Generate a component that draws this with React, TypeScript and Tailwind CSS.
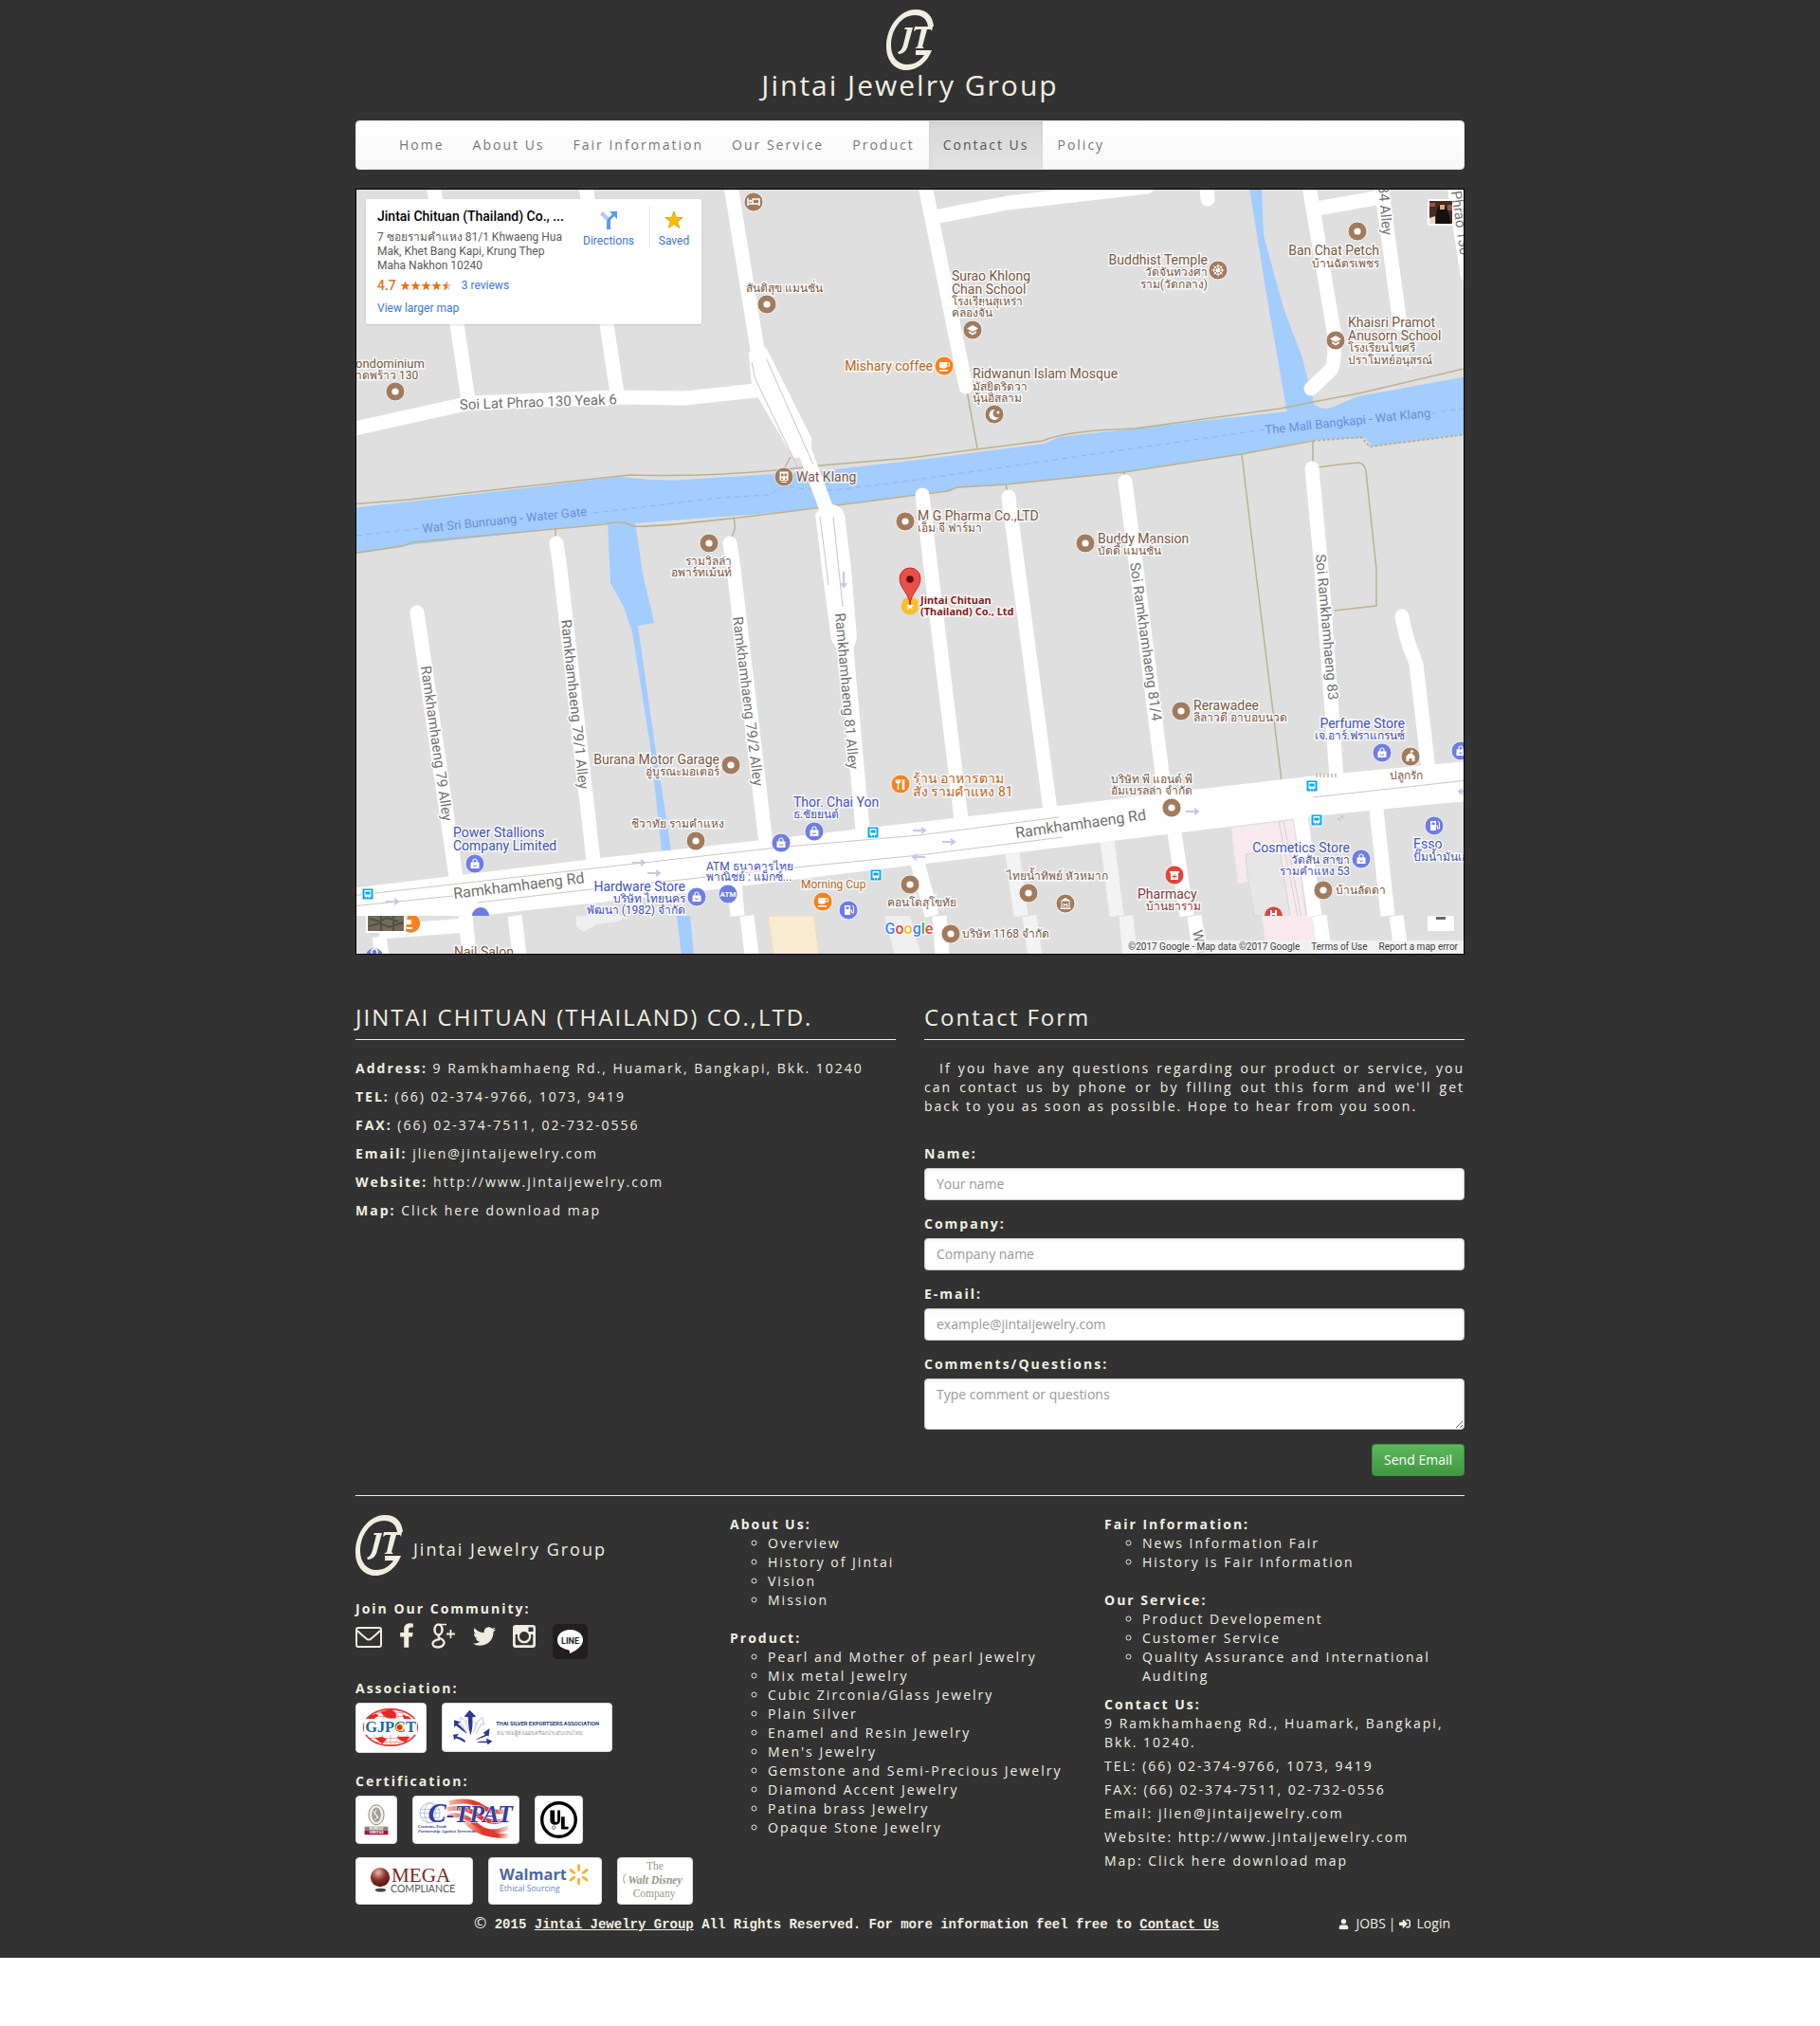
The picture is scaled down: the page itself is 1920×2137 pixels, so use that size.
import React from "react";
import { FaFacebookF, FaTwitter, FaUser, FaSignInAlt } from "react-icons/fa";

const sans = "font-['Open_Sans','Noto_Sans',sans-serif]";

function Monogram() {
  return (
    <svg viewBox="0 0 50 64" className="h-16 w-[50px] shrink-0 fill-[#f0eee0]" role="img" aria-label="JT monogram">
      <path d="M50 18C49 7 43 0 31 0C14 0 0 19 0 39C0 54 9 64 21 64C34 64 44 54 48 43H31V48H40C36 54 30 58 22 58C12 58 5 50 5 38C5 21 16 6 30 6C38 6 43 10 44 18Z" />
      <path d="M20 19H28L23 37C22 43 18 47 13 47L12 45C15 44 17 41 18 37L22 21H19Z" />
      <path d="M30 18H49L48 23L47 21H43L38 39L40 41H30L33 39L37 21H32L29 23Z" />
    </svg>
  );
}

/* ---------- Map ---------- */

type Label = [string, number, number, string, string, number?];
const brown = "#7b5a43";
const blue = "#4152c0";
const orange = "#b9671c";

const labels: Label[] = [
  ["สันติสุข แมนชั่น", 787, 308, brown, "start", 12],
  ["ondominium", 375, 388, brown, "start", 13],
  ["าดพร้าว 130", 375, 400, brown, "start", 12],
  ["Mishary coffee", 984, 391, orange, "end"],
  ["Surao Khlong", 1004, 296, brown, "start"],
  ["Chan School", 1004, 310, brown, "start"],
  ["โรงเรียนสุเหร่า", 1004, 322, brown, "start", 12],
  ["คลองจั่น", 1004, 334, brown, "start", 12],
  ["Ridwanun Islam Mosque", 1026, 399, brown, "start"],
  ["มัสยิดริดวา", 1026, 412, brown, "start", 12],
  ["นุ้นอิสลาม", 1026, 424, brown, "start", 12],
  ["Buddhist Temple", 1274, 279, brown, "end"],
  ["วัดจันทวงศา", 1274, 291, brown, "end", 12],
  ["ราม(วัดกลาง)", 1274, 304, brown, "end", 12],
  ["Ban Chat Petch", 1455, 269, brown, "end"],
  ["บ้านฉัตรเพชร", 1455, 282, brown, "end", 12],
  ["Khaisri Pramot", 1422, 345, brown, "start"],
  ["Anusorn School", 1422, 359, brown, "start"],
  ["โรงเรียนไขศรี", 1422, 371, brown, "start", 12],
  ["ปราโมทย์อนุสรณ์", 1422, 384, brown, "start", 12],
  ["Wat Klang", 840, 508, brown, "start"],
  ["M G Pharma Co.,LTD", 968, 549, brown, "start"],
  ["เอ็ม จี ฟาร์มา", 968, 561, brown, "start", 12],
  ["Buddy Mansion", 1158, 573, brown, "start"],
  ["บัดดี้ แมนชั่น", 1158, 585, brown, "start", 12],
  ["รามวิลล่า", 772, 596, brown, "end", 12],
  ["อพาร์ทเม้นท์", 772, 608, brown, "end", 12],
  ["Burana Motor Garage", 759, 806, brown, "end"],
  ["อู่บูรณะมอเตอร์", 759, 818, brown, "end", 12],
  ["ชีวาทัย รามคำแหง", 666, 873, brown, "start", 12],
  ["Thor. Chai Yon", 837, 851, blue, "start"],
  ["ธ.ชัยยนต์", 837, 863, blue, "start", 12],
  ["Power Stallions", 478, 883, blue, "start"],
  ["Company Limited", 478, 897, blue, "start"],
  ["Hardware Store", 723, 940, blue, "end"],
  ["บริษัท ไทยนคร", 723, 952, blue, "end", 12],
  ["พัฒนา (1982) จำกัด", 723, 964, blue, "end", 12],
  ["ATM ธนาคารไทย", 745, 918, blue, "start", 12],
  ["พาณิชย์ : แม็กซ์...", 745, 929, blue, "start", 12],
  ["Morning Cup", 845, 937, orange, "start", 12],
  ["ร้าน อาหารตาม", 963, 826, orange, "start"],
  ["สั่ง รามคำแหง 81", 963, 840, orange, "start"],
  ["Rerawadee", 1259, 749, brown, "start"],
  ["ลีลาวดี อาบอบนวด", 1259, 761, brown, "start", 12],
  ["บริษัท พี แอนด์ พี", 1258, 826, brown, "end", 12],
  ["อัมเบรลล่า จำกัด", 1258, 838, brown, "end", 12],
  ["Perfume Store", 1482, 768, blue, "end"],
  ["เจ.อาร์.ฟราแกรนซ์", 1482, 780, blue, "end", 12],
  ["ปลูกรัก", 1466, 822, brown, "start", 12],
  ["Cosmetics Store", 1424, 899, blue, "end"],
  ["วัดสัน สาขา", 1424, 911, blue, "end", 12],
  ["รามคำแหง 53", 1424, 923, blue, "end", 12],
  ["Esso", 1491, 895, blue, "start"],
  ["ปั๊มน้ำมันเอสโซ่", 1491, 908, blue, "start", 12],
  ["Pharmacy", 1200, 948, "#863a3a", "start"],
  ["บ้านยาราม", 1209, 960, "#863a3a", "start", 12],
  ["บ้านลัดดา", 1409, 943, brown, "start", 12],
  ["ไทยน้ำทิพย์ หัวหมาก", 1062, 928, brown, "start", 12],
  ["คอนโดสุโขทัย", 936, 956, brown, "start", 12],
  ["บริษัท 1168 จำกัด", 1015, 989, brown, "start", 12],
  ["Nail Salon", 479, 1009, brown, "start"],
];

type Glyph = "dot" | "bag" | "cup" | "cap" | "food" | "bed" | "moon" | "wheel" | "train" | "gas" | "fort" | "museum" | "med" | "atm";
const pins: [number, number, string, Glyph][] = [
  [795, 213, "b", "bed"], [809, 321, "b", "dot"], [417, 413, "b", "dot"], [996, 386, "o", "cup"],
  [1026, 348, "b", "cap"], [1049, 437, "b", "moon"], [1285, 285, "b", "wheel"], [1432, 244, "b", "dot"],
  [1409, 359, "b", "cap"], [827, 503, "b", "train"], [955, 550, "b", "dot"], [1145, 573, "b", "dot"],
  [748, 573, "b", "dot"], [771, 807, "b", "dot"], [734, 887, "b", "dot"], [950, 827, "o", "food"],
  [859, 877, "p", "bag"], [824, 889, "p", "bag"], [501, 911, "p", "bag"], [735, 946, "p", "bag"],
  [768, 943, "p", "atm"], [868, 951, "o", "cup"], [895, 960, "p", "gas"], [960, 933, "b", "dot"],
  [1246, 750, "b", "dot"], [1236, 852, "b", "dot"], [1458, 794, "p", "bag"], [1488, 798, "b", "fort"],
  [1541, 792, "p", "bag"], [1513, 871, "p", "gas"], [1436, 906, "p", "bag"], [1396, 939, "b", "dot"],
  [1085, 942, "b", "dot"], [1124, 953, "b", "museum"], [1239, 923, "r", "med"], [1003, 985, "b", "dot"],
];

const pinColor: Record<string, string> = { b: "#a17b5e", o: "#f58220", p: "#6f7de3", r: "#e0453c" };

function PinGlyph({ kind }: { kind: Glyph }) {
  switch (kind) {
    case "dot":
      return <circle r="3.6" fill="#fff" />;
    case "bag":
      return <g><path d="M-4.500 -1.500H4.500V5H-4.500Z" fill="#fff" /><path d="M-2 -1V-3A2 2 0 0 1 2 -3V-1" fill="none" stroke="#fff" strokeWidth="1.200" /><path d="M-2 1.500Q0 4 2 1.500" fill="none" stroke="#6f7de3" /></g>;
    case "cup":
      return <g fill="#fff"><path d="M-5 -4H3V0Q3 2.500 0 2.500H-2Q-5 2.500 -5 0Z" /><rect x="-5" y="4" width="9" height="1.500" /><path d="M3 -3H5.500V0H3" fill="none" stroke="#fff" /></g>;
    case "cap":
      return <g fill="#fff"><path d="M0 -5L6 -1.500L0 2L-6 -1.500Z" /><path d="M-4 1L0 3.500L4 1V3L0 5.500L-4 3Z" /></g>;
    case "food":
      return <g stroke="#fff" strokeWidth="1.500" fill="none"><path d="M-2.500 6V-5M-4.500 -5V-2Q-2.500 0 -.5 -2V-5" /><path d="M3 6V-5" strokeWidth="2.500" /></g>;
    case "bed":
      return <g stroke="#fff" fill="none"><path d="M-6 -4V4M-6 2H6V4M6 2V-3H-1V2" strokeWidth="1.500" /><circle cx="-3.500" cy="-1" r="1" fill="#fff" /></g>;
    case "moon":
      return <g fill="#fff"><path d="M1 -5A5.500 5.500 0 1 0 5 3A4 4 0 1 1 1 -5Z" /><circle cx="4" cy="-2" r="1.500" /></g>;
    case "wheel":
      return <g stroke="#fff" fill="none"><circle r="4.500" /><circle r="1.500" /><path d="M0 -6.500V6.500M-6.500 0H6.500M-4.500 -4.500L4.500 4.500M4.500 -4.500L-4.500 4.500" /></g>;
    case "train":
      return <g fill="#fff"><path d="M-4.500 -5.500H4.500V4H-4.500ZM-3 5H3V6H-3Z" /><path d="M-3 -3.500H-.5V-.5H-3ZM.5 -3.500H3V-.5H.5ZM-3 1.500H-1V3H-3ZM1 1.500H3V3H1Z" fill="#a17b5e" /></g>;
    case "gas":
      return <g fill="#fff"><path d="M-4 -5H2V5H-4Z" /><path d="M2 0H3.500V3H5.500V-3L4 -5" fill="none" stroke="#fff" /><path d="M-2.500 -3.500H.5V-1H-2.500Z" fill="#6f7de3" /></g>;
    case "fort":
      return <g fill="#fff"><path d="M-4.500 5V-1H-3V-3H3V-1H4.500V5H1.500V2H-1.500V5Z" /><path d="M0 -3V-6.500H3V-4.500H1V-3Z" /></g>;
    case "museum":
      return <g fill="#fff"><path d="M0 -6L6 -2.500H-6ZM-5.500 4.500H5.500V6H-5.500Z" /><path d="M-4 -2V4.500M4 -2V4.500M-1.700 4V0L0 2L1.700 0V4" fill="none" stroke="#fff" /></g>;
    case "med":
      return <g><path d="M-5 -4H5V-2H4V5H-4V-2H-5Z" fill="#fff" /><path d="M0 -1V4M-2.500 1.500H2.500" stroke="#e0453c" /></g>;
    case "atm":
      return <text y="3" textAnchor="middle" className="fill-white text-[8px] font-bold">ATM</text>;
  }
}

const whiteRoads = [
  "M457 196L482 342L494 422", "M618 196L640 342L651 415", "M771 196L800 375",
  "M370 453L496 425L651 419L722 420L797 412", "M845 465L873 540", "M893 685L910 875",
  "M587 573L591 600L626 908", "M770 573L774 600L808 890", "M440 646L481 925",
  "M973 522L982 600L1014 864", "M1064 524L1074 600L1108 855", "M1187 508L1199 600L1228 832",
  "M1384 494L1394 600L1410 820", "M1479 650C1484 680 1490 688 1494 700L1507 812",
  "M976 196L1019 408", "M985 229L1063 214L1210 197", "M1273 196L1274 210",
  "M1381 196L1408 355Q1408 385 1404 390L1383 410", "M1389 220L1457 208",
  "M1457 196L1477 342", "M1534 196L1548 290",
];

const lowerRoads = [
  "M775 932L778 966", "M788 966L793 1008", "M491 966L495 1008", "M543 966L548 1008", "M400 988L403 1008",
  "M968 910L983 966", "M991 966L994 1008", "M1239 878L1252 966", "M1260 966L1266 1008",
  "M1372 860L1387 966", "M1392 966L1398 1008", "M1452 853L1464 966", "M1473 966L1479 1008",
  "M400 983L492 976",
];

const riverTop = "M370 532L431 527Q560 512 665 501Q760 504 865 491L960 483L1100 465Q1125 454 1197 452L1350 431L1385 424L1433 415L1548 388";
const riverBottom = "M370 584L425 576L435 572L638 553Q655 548 668 555Q690 557 829 540L960 523L1000 518L1010 514L1061 511L1186 498L1310 479L1385 465";

function RoadName({ x, y, a, s = 15, children }: { x: number; y: number; a: number; s?: number; children: string }) {
  return (
    <text transform={`translate(${x} ${y}) rotate(${a})`} fontSize={s} fill="#727272" stroke="#fff" strokeWidth="3" paintOrder="stroke">
      {children}
    </text>
  );
}

function BusStop({ x, y }: { x: number; y: number }) {
  return (
    <g transform={`translate(${x} ${y})`}>
      <rect x="-6" y="-6" width="12" height="12" rx="1" fill="#03a9f4" stroke="#fff" />
      <path d="M-3.500 -4H3.500V3H2V4.500H1V3H-1V4.500H-2V3H-3.500Z" fill="#fff" />
      <path d="M-2.500 -2.500H2.500V.5H-2.500Z" fill="#03a9f4" />
    </g>
  );
}

function MapCanvas() {
  return (
    <svg viewBox="376 200 1168 806" className="block h-auto w-full bg-[#dfdfdf] font-[Roboto,'Noto_Sans',sans-serif] font-normal" role="img" aria-label="Map around Ramkhamhaeng Road, Bangkok">
      <g fill="#a3ccff">
        <path d="M370 536L433 529L653 503Q700 508 722 506L864 497L970 485L1102 468L1117 461L1197 452L1358 434L1387 427Q1396 433 1404 430L1433 418L1548 397V458L1448 471L1440 462L1385 464L1310 479L1186 498L1061 511L1008 515L1000 518L960 523L829 540L668 552H638L431 575L370 585Z" />
        <path d="M1318 198H1331L1333 248L1354 325L1373 375L1387 428L1358 436L1339 328Z" />
        <path d="M641 550H670L678 605L690 657L673 660L690 780L708 897H698L686 787L667 667L658 640L644 615Z" />
        <path d="M714 966H728L732 1008H719Z" />
      </g>
      <path d="M376 565L480 553M626 541L760 525L812 522Q825 512 835 513Q845 517 880 517L960 507L1334 453M1510 436L1548 430" fill="none" stroke="#8fb4f5" strokeDasharray="6 4" />
      <g fill="none" stroke="#b9b28f" strokeWidth="1.500">
        <path d={riverTop} />
        <path d={riverBottom} />
        <path d="M1385 465L1436 461L1445 471L1548 458" strokeDasharray="3 2" strokeWidth="2" />
        <path d="M1020 412L1031 473M1385 465V492M1310 479L1325 605L1352 824M1390 493L1412 490L1433 488Q1440 489 1441 497L1452 600V639L1408 644M586 557V566M774 546Q777 558 772 566M1061 511L1063 520M1186 498V504M834 482L827 495" />
      </g>

      <path d="M608 966H659L653 972L630 975L615 983L608 977ZM933 966H960L972 1008H944Z" fill="#efefef" />
      <path d="M810 966H859L864 1008H816Z" fill="#f9ebd2" stroke="#ecdcae" />
      <path d="M1299 873L1364 865L1377 966H1361L1323 966L1316 930L1306 932Z" fill="#f7e9ee" />
      <path d="M1314 901L1350 896L1361 966H1323L1316 925Z" fill="#e6e6e6" stroke="#d5d5d5" />
      <path d="M1349 866L1377 1006M1354 866L1380 1006" stroke="#d6d0d2" fill="none" />
      <path d="M1331 966H1385L1389 993H1335Z" fill="#f7e9ee" />
      <path d="M1068 900L1077 966M1086 966L1092 1008M1168 886L1178 966M1188 966L1192 1008" stroke="#f3f3f3" strokeWidth="15" fill="none" />

      <g fill="none" stroke="#fff" strokeWidth="15" strokeLinejoin="round" strokeLinecap="round">
        {whiteRoads.map((d) => <path key={d} d={d} />)}
      </g>
      <g fill="none" stroke="#fff" strokeWidth="15">
        {lowerRoads.map((d) => <path key={d} d={d} />)}
      </g>
      <g fill="#fff">
        <path d="M790 372Q798 358 809 368L856 462Q858 476 850 482L837 483L793 408Z" />
        <path d="M860 542Q868 532 879 532Q888 534 891 543L898 600L904 673L898 692H887L877 675L867 600Z" />
        <path d="M370 937L634 905L814 885L970 867L1117 850L1258 833L1389 818L1548 803V845L1444 855L1377 862L1247 878L960 913L779 935L722 942L504 966H370Z" />
      </g>
      <g fill="none" stroke="#cdc5bd">
        <path d="M370 945L829 893L970 881L1117 862M370 956L478 945M504 952L615 939L868 912L970 902L1121 883M1385 841L1548 823" />
        <path d="M793 382L797 400L845 500M809 379Q820 405 858 490M865 545L872 600L874 617M879 545L889 640" />
        <path d="M1388 818H1412M1412 865L1418 860" strokeDasharray="2 2" strokeWidth="4" />
      </g>
      <g fill="none" stroke="#c7c7e3" strokeWidth="2">
        {[[667, 910], [683, 921], [407, 951], [963, 876], [994, 888], [1251, 856]].map(([x, y]) => (
          <path key={x} d={`M${x} ${y}h13m-4 -3l4 3l-4 3`} />
        ))}
        <path d="M976 904h-13m4 -3l-4 3l4 3M1550 835h-11m4 -3l-4 3l4 3M890 603v16m-3 -4l3 4l3 -4" />
      </g>

      <RoadName x={485} y={432} a={-2}>Soi Lat Phrao 130 Yeak 6</RoadName>
      <RoadName x={479} y={948} a={-7} s={16}>Ramkhamhaeng Rd</RoadName>
      <RoadName x={1072} y={884} a={-8} s={16}>Ramkhamhaeng Rd</RoadName>
      <RoadName x={444} y={703} a={82}>Ramkhamhaeng 79 Alley</RoadName>
      <RoadName x={592} y={654} a={84}>Ramkhamhaeng 79/1 Alley</RoadName>
      <RoadName x={773} y={651} a={83}>Ramkhamhaeng 79/2 Alley</RoadName>
      <RoadName x={881} y={647} a={85}>Ramkhamhaeng 81 Alley</RoadName>
      <RoadName x={1192} y={594} a={82}>Soi Ramkhamhaeng 81/4</RoadName>
      <RoadName x={1388} y={585} a={85}>Soi Ramkhamhaeng 83</RoadName>
      <RoadName x={1454} y={196} a={85}>84 Alley</RoadName>
      <RoadName x={1531} y={202} a={82}>Phrao 130</RoadName>
      <RoadName x={1258} y={982} a={80}>Wat</RoadName>
      <g fill="#6b8fd6" stroke="#a3ccff" strokeWidth="3" paintOrder="stroke" fontSize="13">
        <text transform="translate(446 562) rotate(-6)">Wat Sri Bunruang - Water Gate</text>
        <text transform="translate(1335 458) rotate(-6)">The Mall Bangkapi - Wat Klang</text>
      </g>

      <path d="M498 966A9 9 0 0 1 516 966Z" fill="#6f7de3" />
      <path d="M1334 966A9 9 0 0 1 1353 966Z" fill="#e0453c" />
      <path d="M1341 966V960M1346 966V960M1341 964H1346" stroke="#fff" strokeWidth="2" />
      <circle cx="395" cy="1009" r="9" fill="#6f7de3" />
      <path d="M392 1006V1004A3 3 0 0 1 398 1004V1006" fill="none" stroke="#fff" strokeWidth="1.500" />
      <path d="M430 966H439A9 9 0 0 1 428 982Z" fill="#f58220" />
      <path d="M429 970H434V975H429ZM429 978H435V980H429Z" fill="#fff" />
      <g strokeWidth="3" stroke="#fff" strokeOpacity="0.8" paintOrder="stroke">
        {labels.map(([t, x, y, c, anchor, size]) => (
          <text key={t + x + y} x={x} y={y} fill={c} textAnchor={anchor as "start" | "end"} fontSize={size ?? 14}>{t}</text>
        ))}
      </g>
      {pins.map(([x, y, c, kind]) => (
        <g key={`${x}-${y}`} transform={`translate(${x} ${y})`}>
          <circle r="10" fill={pinColor[c]} stroke="#fff" strokeOpacity="0.8" />
          <PinGlyph kind={kind} />
        </g>
      ))}
      <BusStop x={388} y={943} /><BusStop x={921} y={878} /><BusStop x={924} y={923} />
      <BusStop x={1384} y={829} /><BusStop x={1389} y={865} />

      <circle cx="960" cy="639" r="9.500" fill="#fbc02d" />
      <path d="M960 635L961 638H964L962 640L963 643L960 641L957 643L958 640L956 638H959Z" fill="#fff" />
      <path d="M960 638C959 625 949 621 949 610A11 11 0 0 1 971 610C971 621 961 625 960 638Z" fill="#ea4f47" stroke="#b5302a" />
      <circle cx="960" cy="611" r="3.800" fill="#5e0f0c" />
      <g className="fill-[#8b1a1a] font-['Noto_Sans'] text-[11px] font-bold" stroke="#fff" strokeOpacity="0.8" strokeWidth="3" paintOrder="stroke">
        <text x="971" y="637">Jintai Chituan</text>
        <text x="971" y="649">(Thailand) Co., Ltd</text>
      </g>

      <g>
        <rect x="1506" y="210" width="26" height="28" rx="1" fill="#fff" />
        <rect x="1508" y="212" width="24" height="24" fill="#4c2a22" />
        <path d="M1515 236V224Q1518 213 1523 216Q1530 224 1530 236Z" fill="#14110f" />
        <path d="M1519 216h5v5h-5Z" fill="#d9a988" /><path d="M1508 230l6 -2v8h-6Z" fill="#e4dcd2" /><path d="M1508 214h6v4h-6ZM1527 216h5v6h-5Z" fill="#8b5a48" />
        <path d="M386 966H428V984H386Z" fill="#fff" />
        <path d="M388 966H426V982H388Z" fill="#75695c" />
        <path d="M390 969l10 3l8 -4l12 4M389 977l12 -3l10 4l14 -5M402 966v16M415 966v16" stroke="#4d5140" strokeWidth="2" fill="none" />
        <path d="M1506 966H1534V982H1506Z" fill="#fff" /><rect x="1515" y="967" width="10" height="3" fill="#666" />
      </g>
      <text x="959" y="985" textAnchor="middle" stroke="#fff" strokeWidth="2" paintOrder="stroke" className="text-[16px] font-medium">
        <tspan fill="#4285f4">G</tspan><tspan fill="#ea4335">o</tspan><tspan fill="#fbbc05">o</tspan><tspan fill="#4285f4">g</tspan><tspan fill="#34a853">l</tspan><tspan fill="#ea4335">e</tspan>
      </text>
    </svg>
  );
}

const starPath = "M12 1L14.900 8.800L23 9.100L16.600 14.200L18.900 22.100L12 17.500L5.100 22.100L7.400 14.200L1 9.100L9.100 8.800Z";

function PlaceCard() {
  return (
    <div className="absolute left-[10px] top-[10px] flex h-[132px] w-[354px] rounded-xs bg-white px-3 py-2 font-[Roboto,'Noto_Sans',sans-serif] text-xs font-normal text-[#5b5b5b] shadow">
      <div className="w-[205px] shrink-0">
        <p className="text-sm font-medium leading-5 whitespace-nowrap text-black">Jintai Chituan (Thailand) Co., ...</p>
        <p className="mt-[5px] leading-[15px]">7 ซอยรามคำแหง 81/1 Khwaeng Hua<br />Mak, Khet Bang Kapi, Krung Thep<br />Maha Nakhon 10240</p>
        <p className="mt-[3px] flex items-center leading-5">
          <span className="text-sm font-medium text-[#e7711b]">4.7</span>
          <span className="ml-1 flex" role="img" aria-label="4.7 stars">
            {[0, 1, 2, 3, 4].map((i) => (
              <svg key={i} viewBox="0 0 24 24" className="size-[11px]">
                <path d={starPath} fill={i === 4 ? "#cfcfcf" : "#e7711b"} />
                {i === 4 && <path d="M12 1V17.500L5.100 22.100L7.400 14.200L1 9.100L9.100 8.800Z" fill="#e7711b" />}
              </svg>
            ))}
          </span>
          <a href="#reviews" className="ml-[10px] text-[#3a75df]">3 reviews</a>
        </p>
        <a href="#map" className="mt-1 block leading-5 text-[#3a75df]">View larger map</a>
      </div>
      <a href="#directions" className="flex w-[78px] flex-col items-center pt-1 text-[#3a75df]">
        <svg viewBox="0 0 20 20" className="size-5"><path d="M9 20V12L1 4L4 1L11 8" fill="#b0cdf5" /><path d="M8 20V13Q8 10 10 8L14 4L11 1H19V9L16 6L12 10V20Z" fill="#5a9aea" /></svg>
        <span className="mt-1">Directions</span>
      </a>
      <a href="#saved" className="ml-[4px] flex h-11 flex-1 flex-col items-center border-l border-gray-200 pt-1 pl-2 text-[#3a75df]">
        <svg viewBox="0 0 24 24" className="size-5 shrink-0"><path d={starPath} fill="#fbbc05" stroke="#dca000" /></svg>
        <span className="mt-1">Saved</span>
      </a>
    </div>
  );
}

/* ---------- Footer pictures ---------- */

const card = "shrink-0 rounded border border-[#dddddd] bg-white";
const serif = "font-['Liberation_Serif',serif]";

function Gjpct() {
  return (
    <svg viewBox="0 0 75 53" className={`${card} h-[53px] w-[75px]`} role="img" aria-label="GJPCT">
      <g fill="none" stroke="#f0a09c"><ellipse cx="37" cy="26" rx="20" ry="20" /><ellipse cx="37" cy="26" rx="10" ry="20" /><path d="M37 6V46M14 14H60M14 38H60M20 10H54M20 42H54" /></g>
      <ellipse cx="37" cy="26" rx="29.500" ry="20" fill="none" stroke="#e52a26" strokeWidth="1.500" />
      <path d="M26 9L38 6L43 11V16H34L30 14ZM13 14L21 11L24 13L18 17H12ZM50 12L58 15L61 18H52ZM44 36H58L54 42L47 40ZM20 38L27 36L33 39L28 44Z" fill="#e52a26" />
      <path d="M8 17H66V34H8Z" fill="#fff" />
      <text x="37" y="31" textAnchor="middle" className={`${serif} fill-[#1769a8] text-[17px] font-bold`}>GJPCT</text>
      <circle cx="47" cy="26" r="3.500" fill="#e52a26" stroke="#f3d43b" strokeWidth="1.500" />
    </svg>
  );
}

function SilverAssociation() {
  return (
    <svg viewBox="0 0 180 52" className={`${card} h-[52px] w-[180px]`} role="img" aria-label="Thai Silver Exportsers Association">
      <g fill="#2b3990">
        <path d="M28 35Q25 24 25.500 15L21 14L27 7L34 14L30 15Q31 25 28 35Z" />
        <path d="M24 33Q20 26 14 22L17 20L10 18V26L12 24Q18 29 24 33ZM22 40Q18 37 13 36L15 33L9 34L10 40L12 38Q17 39 22 43ZM33 40Q40 36 44 34L42 32L49 27L48 36L46 35Q40 38 33 40ZM34 42Q41 41 46 41L45 38L52 41L47 45L46 43Q40 43 34 42Z" />
      </g>
      <path d="M24 32L19 23H17L17 15L24 20L22 21L27 31M31 32L35 22H33L41 15L43 23L40 22L34 33" fill="none" stroke="#b9bfdf" />
      <text x="56" y="24" className="fill-[#233a75] font-[Roboto,sans-serif] text-[6px] font-bold">THAI SILVER EXPORTSERS ASSOCIATION</text>
      <text x="57" y="34" className="fill-[#9a9a9a] text-[6px] font-normal">สมาคมผู้ส่งออกเครื่องประดับเงินไทย</text>
    </svg>
  );
}

function BureauVeritas() {
  return (
    <svg viewBox="0 0 44 51" className={`${card} h-[51px] w-11`} role="img" aria-label="Bureau Veritas">
      <ellipse cx="22" cy="20" rx="8.500" ry="11" fill="#f0eee9" stroke="#8a857a" /><ellipse cx="22" cy="20" rx="5" ry="8" fill="#a39e93" />
      <path d="M22 14L20 19L24 22L20 26M19 16L24 24" stroke="#fff" fill="none" />
      <rect x="9" y="33" width="26" height="4.500" fill="#8a857a" /><rect x="9" y="37.500" width="26" height="4.500" fill="#a8123e" />
      <g className="fill-white font-[Roboto] text-[4px] font-bold" textAnchor="middle"><text x="22" y="37">BUREAU</text><text x="22" y="41">VERITAS</text></g>
    </svg>
  );
}

function Ctpat() {
  return (
    <svg viewBox="0 0 113 51" className={`${card} h-[51px] w-[113px]`} role="img" aria-label="C-TPAT">
      <defs><linearGradient id="stripe" x1="0" x2="1"><stop offset="0" stopColor="#f6b9a8" /><stop offset=".4" stopColor="#e2382f" /><stop offset=".75" stopColor="#e2382f" /><stop offset="1" stopColor="#fbe3dc" /></linearGradient></defs>
      <g fill="none" stroke="#b9bddd"><circle cx="17" cy="18" r="11" /><ellipse cx="17" cy="18" rx="6" ry="11" /><path d="M6 14H28M6 18H28M7 23H27" /></g>
      <g fill="none" stroke="url(#stripe)" strokeWidth="5"><path d="M38 7Q60 2 74 11T103 15" /><path d="M36 14Q56 10 70 21T103 25" /><path d="M38 21Q54 18 68 31T103 34" /><path d="M56 27Q70 44 103 43" /></g>
      <text x="15" y="28" className={`${serif} fill-[#343f9b] text-[30px] font-bold italic`}>C</text>
      <text x="35" y="28" className={`${serif} fill-[#343f9b] text-[27px] font-bold italic`} stroke="#fff" paintOrder="stroke">-TPAT</text>
      <g className={`${serif} fill-[#343f9b] text-[5px] font-bold italic`}><text x="4" y="34">Customs-Trade</text><text x="4" y="40">Partnership Against Terrorism</text></g>
    </svg>
  );
}

function Ul() {
  return (
    <svg viewBox="0 0 51 51" className={`${card} size-[51px]`} role="img" aria-label="UL">
      <circle cx="25.500" cy="25.500" r="18.500" fill="none" stroke="#000" strokeWidth="3.500" />
      <path d="M16 15H21V26Q21 28 22.500 28T24 26V15H27V26Q27 31 21.500 31T16 26ZM28 22H32V33H36V36H28Z" fill="#000" />
      <circle cx="20" cy="34" r="1.800" fill="none" stroke="#000" strokeWidth=".6" />
    </svg>
  );
}

function Omega() {
  return (
    <svg viewBox="0 0 124 50" className={`${card} h-[50px] w-[124px]`} role="img" aria-label="Omega Compliance">
      <defs><radialGradient id="ball" cx=".4" cy=".25" r=".8"><stop offset="0" stopColor="#e9b9a8" /><stop offset=".5" stopColor="#8b3128" /><stop offset="1" stopColor="#4d100c" /></radialGradient></defs>
      <circle cx="24.500" cy="21" r="10.500" fill="url(#ball)" /><ellipse cx="25" cy="35" rx="6" ry="2" fill="#444" />
      <text x="37" y="26" className={`${serif} fill-[#7a2a22] text-[22px] font-normal`}>MEGA</text>
      <text x="36" y="38" className="fill-[#555] font-[Lato] text-[11px] font-normal">COMPLIANCE</text>
    </svg>
  );
}

function Walmart() {
  return (
    <svg viewBox="0 0 120 50" className={`${card} h-[50px] w-[120px]`} role="img" aria-label="Walmart Ethical Sourcing">
      <text x="10" y="24" className="fill-[#4a68a8] font-['Open_Sans'] text-[17px] font-bold">Walmart</text>
      <text x="10" y="36" className="fill-[#6b86bd] font-['Open_Sans'] text-[9px]">Ethical Sourcing</text>
      <g stroke="#f9b233" strokeWidth="3" strokeLinecap="round"><path d="M97 8V13M97 23V28M88 13L92 16M106 13L102 16M88 24L92 21M106 24L102 21" /></g>
    </svg>
  );
}

function Disney() {
  return (
    <svg viewBox="0 0 80 50" className={`${card} h-[50px] w-20`} role="img" aria-label="The Walt Disney Company">
      <g className={`${serif} fill-[#99978b]`} textAnchor="middle">
        <text x="40" y="13" className="text-[12px] font-normal">The</text>
        <text x="39" y="43" className="text-[12px] font-normal">Company</text>
        <text x="40" y="28" className="text-[12px] font-bold italic">Walt Disney</text>
      </g>
      <path d="M8 17Q3 22 7 28" fill="none" stroke="#99978b" />
    </svg>
  );
}

/* ---------- Page ---------- */

const nav = ["Home", "About Us", "Fair Information", "Our Service", "Product", "Contact Us", "Policy"];
const contact: [string, string][] = [
  ["Address:", "9 Ramkhamhaeng Rd., Huamark, Bangkapi, Bkk. 10240"],
  ["TEL:", "(66) 02-374-9766, 1073, 9419"],
  ["FAX:", "(66) 02-374-7511, 02-732-0556"],
  ["Email:", "jlien@jintaijewelry.com"],
  ["Website:", "http://www.jintaijewelry.com"],
  ["Map:", "Click here download map"],
];

function LinkList({ title, items }: { title: string; items: string[] }) {
  return (
    <section>
      <h4 className="font-bold">{title}</h4>
      <ul className="list-[circle] pl-10">
        {items.map((t) => <li key={t}><a href="#page">{t}</a></li>)}
      </ul>
    </section>
  );
}

const field = "block w-full rounded border border-[#cccccc] bg-white px-3 py-[6px] text-sm leading-5 font-normal tracking-normal text-[#555555] placeholder-[#999999] shadow-inner";

function Field({ id, label, hint }: { id: string; label: string; hint: string }) {
  return (
    <div className="mb-[15px]">
      <label htmlFor={id} className="mb-[5px] block font-bold">{label}</label>
      <input id={id} placeholder={hint} className={field} />
    </div>
  );
}

export default function App() {
  return (
    <div className={`${sans} min-h-screen bg-white text-sm leading-5 font-medium tracking-[2px] text-[#f0eee0]`}>
      <div className="bg-[#323232] pb-[25px]">
        <div className="mx-auto max-w-[1170px]">
          <header className="flex flex-col items-center pt-[10px]">
            <Monogram />
            <h1 className="text-[30px] leading-8">Jintai Jewelry Group</h1>
          </header>

          <nav className="mt-[21px] flex h-[52px] rounded border border-[#e7e7e7] bg-linear-to-b from-white to-[#f8f8f8] pl-[30px] font-normal text-[#777777]">
            {nav.map((n) => (
              <a key={n} href="#page" aria-current={n === "Contact Us" ? "page" : undefined} className="px-[15px] py-[15px] aria-[current]:bg-linear-to-b aria-[current]:from-[#d8d8d8] aria-[current]:to-[#e2e2e2] aria-[current]:text-[#555555] aria-[current]:shadow-inner">{n}</a>
            ))}
          </nav>

          <div className="relative mt-5 overflow-hidden border border-black tracking-normal">
            <MapCanvas />
            <PlaceCard />
            <div className="absolute right-0 bottom-0 flex h-[14px] items-center gap-[12px] bg-[#f5f5f5]/80 px-[6px] font-[Roboto] text-[10px] font-normal text-[#444444]">
              <span>©2017 Google - Map data ©2017 Google</span>
              <a href="#terms">Terms of Use</a>
              <a href="#report">Report a map error</a>
            </div>
          </div>

          <main className="grid grid-cols-2 gap-[30px] pt-[50px]">
            <section>
              <h2 className="border-b border-[#eeeeee] pb-[8px] text-2xl leading-[31px]">JINTAI CHITUAN (THAILAND) CO.,LTD.</h2>
              <div className="mt-5 flex flex-col gap-[10px]">
                {contact.map(([k, v]) => <p key={k}><strong>{k}</strong> {v}</p>)}
              </div>
            </section>
            <section>
              <h2 className="border-b border-[#eeeeee] pb-[8px] text-2xl leading-[31px]">Contact Form</h2>
              <p className="mt-5 indent-4 text-justify">If you have any questions regarding our product or service, you can contact us by phone or by filling out this form and we'll get back to you as soon as possible. Hope to hear from you soon.</p>
              <form className="mt-[30px]">
                <Field id="name" label="Name:" hint="Your name" />
                <Field id="company" label="Company:" hint="Company name" />
                <Field id="email" label="E-mail:" hint="example@jintaijewelry.com" />
                <label htmlFor="comments" className="mb-[5px] block font-bold">Comments/Questions:</label>
                <textarea id="comments" rows={2} placeholder="Type comment or questions" className={field} />
                <div className="mt-[15px] flex justify-end">
                  <button type="button" className="h-[34px] rounded border border-[#3e8f3e] bg-linear-to-b from-[#5cb85c] to-[#419641] px-3 tracking-normal text-white">Send Email</button>
                </div>
              </form>
            </section>
          </main>

          <footer className="mt-5 border-t border-[#eeeeee]">
            <div className="grid grid-cols-3 gap-[15px] pt-5">
              <div>
                <div className="flex items-center gap-[11px]">
                  <Monogram />
                  <span className="pt-2 text-lg">Jintai Jewelry Group</span>
                </div>
                <h4 className="mt-[25px] font-bold">Join Our Community:</h4>
                <div className="mt-[5px] flex h-[38px] gap-[18px] text-[#f0eee0]">
                  <a href="#mail" aria-label="Mail"><svg viewBox="0 0 28 28" className="mt-px size-7" fill="none" stroke="currentColor" strokeWidth="2"><rect x="1" y="4" width="26" height="20" rx="2" /><path d="M2 7Q7 12 11 15Q14 18 17 15Q21 12 26 7" /></svg></a>
                  <a href="#facebook" aria-label="Facebook"><FaFacebookF className="h-[26px] w-4" /></a>
                  <a href="#google" aria-label="Google Plus"><svg viewBox="0 0 26 27" className="h-[27px] w-[26px]" fill="none" stroke="currentColor"><path d="M16 1.500H9" strokeWidth="1.500" /><ellipse cx="7.500" cy="7" rx="4" ry="5.500" strokeWidth="2.500" /><path d="M9 12Q6 14 9 16Q14 18 13.500 21Q13 25 7 25.500Q1 25 1.500 21.500Q2 18 9 17" strokeWidth="2.300" /><path d="M16 11.500H25M20.500 7V16" strokeWidth="1.800" /></svg></a>
                  <a href="#twitter" aria-label="Twitter"><FaTwitter className="mt-[2px] size-6" /></a>
                  <a href="#instagram" aria-label="Instagram"><svg viewBox="0 0 24 24" className="mt-[2px] size-6"><path fillRule="evenodd" d="M3 0H21Q24 0 24 3V21Q24 24 21 24H3Q0 24 0 21V3Q0 0 3 0ZM16.500 2.500V7H21.500V2.500ZM2.700 10V20Q2.700 21.300 4 21.300H20Q21.300 21.300 21.300 20V10H19A7.300 7.300 0 1 1 5 10ZM12 7A5 5 0 1 0 12 17A5 5 0 1 0 12 7Z" fill="currentColor" /></svg></a>
                  <a href="#line" aria-label="LINE"><svg viewBox="0 0 37 37" className="mt-px size-[37px]"><rect width="37" height="37" rx="5" fill="#221e1f" /><path d="M18.500 6C10 6 5 11 5 17C5 23 10 26 17 27.500C18 28 18 29 18 31C24 29 32 23 32 17C32 11 27 6 18.500 6Z" fill="#fff" /><text x="18.500" y="20.500" textAnchor="middle" className="fill-[#221e1f] font-[Roboto] text-[9px] font-bold tracking-normal">LINE</text></svg></a>
                </div>
                <h4 className="mt-[21px] font-bold">Association:</h4>
                <div className="mt-[5px] flex items-start gap-4 tracking-normal"><Gjpct /><SilverAssociation /></div>
                <h4 className="mt-[20px] font-bold">Certification:</h4>
                <div className="mt-[5px] flex gap-4 tracking-normal"><BureauVeritas /><Ctpat /><Ul /></div>
                <div className="mt-[14px] flex gap-4 tracking-normal"><Omega /><Walmart /><Disney /></div>
              </div>
              <div className="flex flex-col gap-5">
                <LinkList title="About Us:" items={["Overview", "History of Jintai", "Vision", "Mission"]} />
                <LinkList title="Product:" items={["Pearl and Mother of pearl Jewelry", "Mix metal Jewelry", "Cubic Zirconia/Glass Jewelry", "Plain Silver", "Enamel and Resin Jewelry", "Men's Jewelry", "Gemstone and Semi-Precious Jewelry", "Diamond Accent Jewelry", "Patina brass Jewelry", "Opaque Stone Jewelry"]} />
              </div>
              <div>
                <div className="flex flex-col gap-5">
                  <LinkList title="Fair Information:" items={["News Information Fair", "History is Fair Information"]} />
                  <LinkList title="Our Service:" items={["Product Developement", "Customer Service", "Quality Assurance and International Auditing"]} />
                </div>
                <h4 className="mt-[10px] font-bold">Contact Us:</h4>
                <div className="flex flex-col gap-[5px]">
                  <p>9 Ramkhamhaeng Rd., Huamark, Bangkapi,<br />Bkk. 10240.</p>
                  {contact.slice(1).map(([k, v]) => <p key={k}>{k} {v}</p>)}
                </div>
              </div>
            </div>
            <div className="mt-[9px] grid grid-cols-[1fr_auto] items-center pr-[15px] tracking-normal">
              <p className="pl-[125px] font-['Liberation_Mono',monospace] font-bold"><span className="font-['Open_Sans'] text-base leading-5 font-normal">©</span> 2015 <a href="#home" className="underline">Jintai Jewelry Group</a> All Rights Reserved. For more information feel free to <a href="#contact" className="underline">Contact Us</a></p>
              <p className="flex items-center gap-[3px]"><a href="#jobs" className="flex items-center gap-[7px]"><FaUser className="size-[11px]" />JOBS</a>|<a href="#login" className="flex items-center gap-[7px]"><FaSignInAlt className="size-3" />Login</a></p>
            </div>
          </footer>
        </div>
      </div>
    </div>
  );
}
